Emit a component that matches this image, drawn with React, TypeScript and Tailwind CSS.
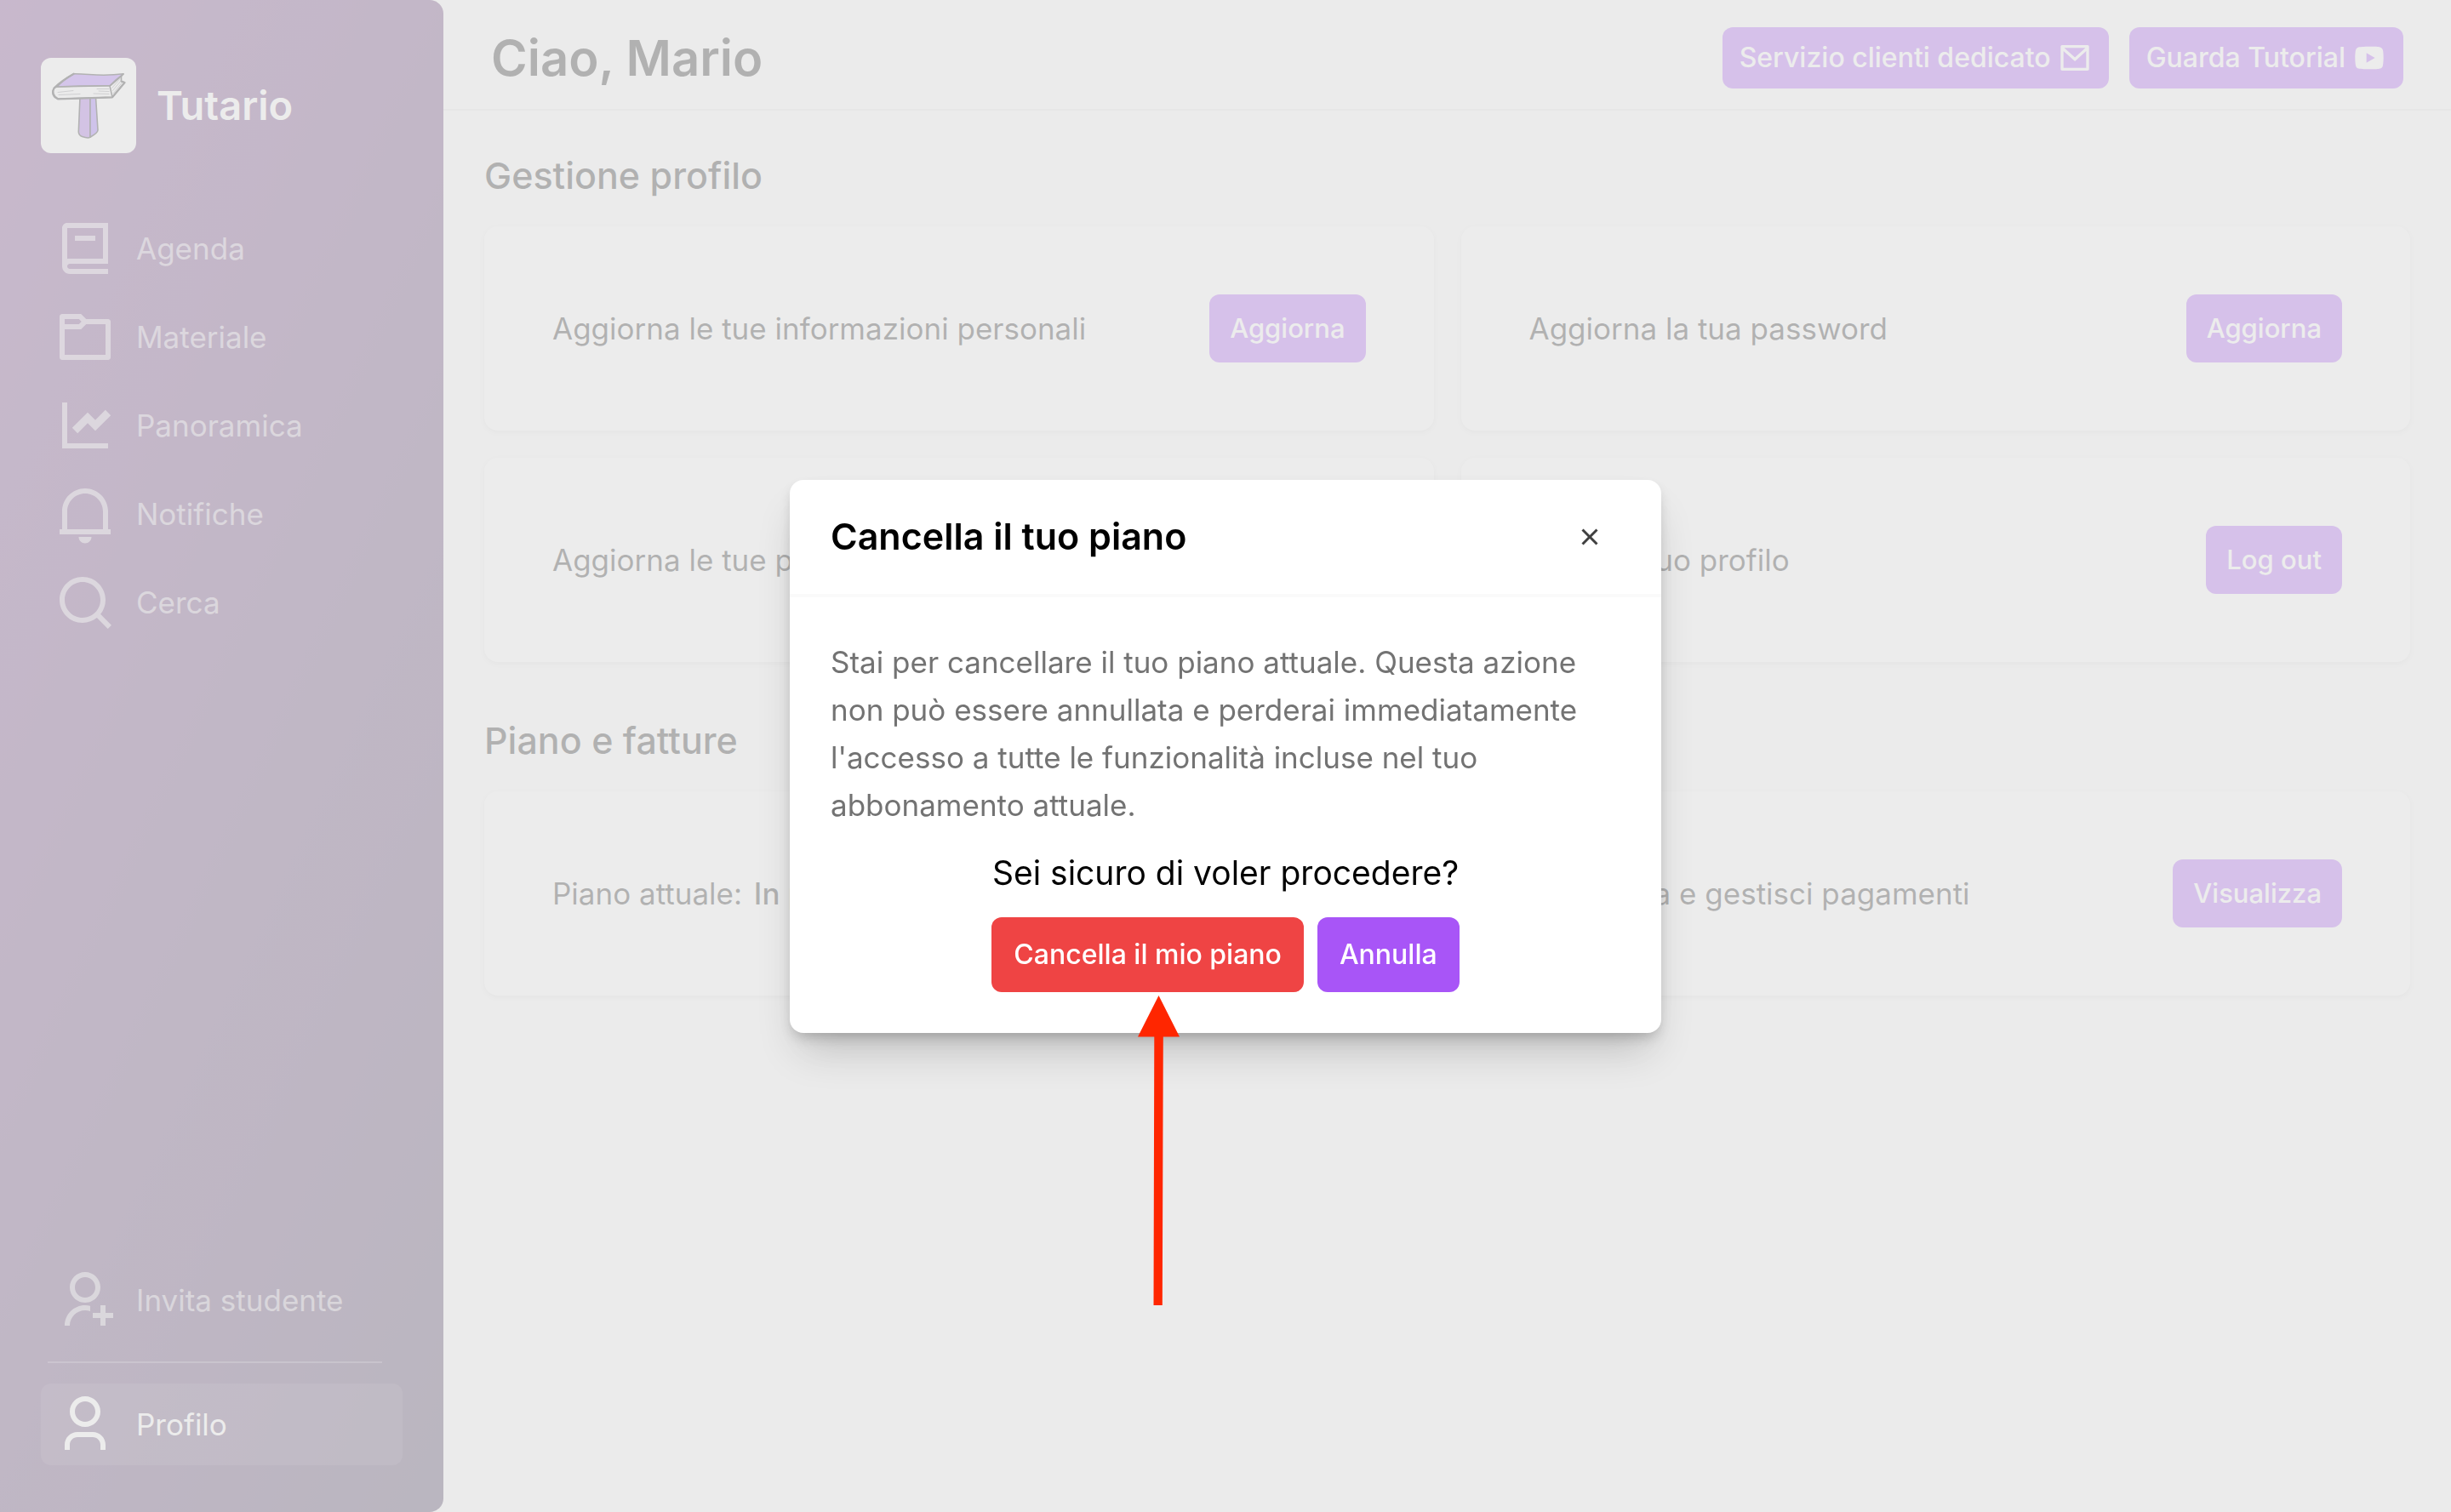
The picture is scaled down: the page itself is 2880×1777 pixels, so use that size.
import type { ReactNode } from "react";
import type { IconType } from "react-icons";
import {
  RiBook2Line,
  RiCloseLine,
  RiFolder6Line,
  RiLineChartFill,
  RiMailLine,
  RiNotification2Line,
  RiSearchLine,
  RiUser3Line,
  RiUserAddLine,
  RiYoutubeFill,
} from "react-icons/ri";

const mainLinks = [
  { label: "Agenda", href: "#agenda", icon: RiBook2Line },
  { label: "Materiale", href: "#materiale", icon: RiFolder6Line },
  { label: "Panoramica", href: "#panoramica", icon: RiLineChartFill },
  { label: "Notifiche", href: "#notifiche", icon: RiNotification2Line },
  { label: "Cerca", href: "#cerca", icon: RiSearchLine },
];

/** Logo: un libro appoggiato su un manico, a forma di T. */
function Logo() {
  return (
    <svg
      viewBox="0 0 112 112"
      className="w-28 h-28 shrink-0 rounded-xl bg-white"
      stroke="#18181b"
      strokeWidth={1.6}
      strokeLinejoin="round"
      strokeLinecap="round"
      aria-hidden="true"
    >
      <path d="M46 46L44.300 87Q44.500 91 48.500 92.500Q55.500 95 58 93.200L58 46Z" fill="#9b5de0" />
      <path d="M58 46L64.500 46L67 85Q67 88 58 93.200Z" fill="#8b5cf6" />
      <path d="M19 34L81 32.800L97 19L94.500 21.500L94.500 27.500L98.500 29L84 46.300L20 48.300Q14 46.500 13.800 40.500Q14 35.500 19 34Z" fill="#fafafa" />
      <path d="M38.700 18.700C58 18.500 68 22.500 97 18.800Q89 24.500 81 32.800Q48 32.600 19 34Q26 26 38.700 18.700Z" fill="#a066f5" />
      <path d="M38.700 18.700Q24 27 15.500 35.500Q11.500 43 20 48.300L84 46.300L98.500 29L94.500 27.500" fill="none" strokeWidth={2.2} />
      <path d="M81 32.800L84 46.300M82.500 32L95 21" fill="none" />
      <path
        d="M20 40.500L38 38.500M21 43.500L46 42.500M62 42L80 42.500M68 39L80 39.500M66 36.500L80 36.500M85 42L95 29.500M84.500 38.500L94 27M84 35L93.500 24"
        fill="none"
        stroke="#71717a"
        strokeWidth={0.8}
      />
    </svg>
  );
}

function NavItem({
  label,
  href,
  icon: Icon,
  active = false,
}: {
  label: string;
  href: string;
  icon: IconType;
  active?: boolean;
}) {
  return (
    <a
      href={href}
      aria-current={active ? "page" : undefined}
      className={`flex items-center gap-6 h-24 px-4 rounded-xl text-[35px] ${
        active ? "bg-white/10 text-white" : "text-white/60"
      }`}
    >
      <Icon size={72} className="shrink-0" />
      {label}
    </a>
  );
}

function Sidebar() {
  return (
    <aside className="w-[521px] shrink-0 flex flex-col px-12 pt-17 pb-[55px] rounded-r-2xl bg-[linear-gradient(115deg,#703282,#39284f)]">
      <div className="flex items-center gap-6">
        <Logo />
        <span className="text-[47px] font-semibold text-white">Tutario</span>
      </div>
      <nav className="flex-1 flex flex-col gap-2 mt-16">
        {mainLinks.map((link) => (
          <NavItem key={link.label} {...link} />
        ))}
        <div className="mt-auto flex flex-col gap-6">
          <NavItem label="Invita studente" href="#invita" icon={RiUserAddLine} />
          <hr className="ml-2 mr-6 border-t-2 border-white/25" />
          <NavItem label="Profilo" href="#profilo" icon={RiUser3Line} active />
        </div>
      </nav>
    </aside>
  );
}

function HeaderButton({ label, icon: Icon }: { label: string; icon: IconType }) {
  return (
    <button
      type="button"
      className="flex items-center gap-2 h-18 px-5 rounded-xl bg-[#a855f7] text-white text-[32px] font-medium"
    >
      {label}
      <Icon size={40} />
    </button>
  );
}

function Card({ action, children }: { action: string; children: ReactNode }) {
  return (
    <div className="flex items-center justify-between h-60 px-20 rounded-2xl bg-white shadow-[0_2px_6px_rgba(0,0,0,0.1)]">
      <p className="text-[35px]">{children}</p>
      <button
        type="button"
        className="h-20 px-6 rounded-xl bg-[#a855f7] text-white text-[31px] font-medium"
      >
        {action}
      </button>
    </div>
  );
}

function Section({ title, children }: { title: string; children: ReactNode }) {
  return (
    <section>
      <h2 className="text-[43px] leading-[60px] font-medium">{title}</h2>
      <div className="grid grid-cols-2 gap-8 mt-[30px]">{children}</div>
    </section>
  );
}

/** Freccia che indica il pulsante di conferma. */
function Arrow() {
  return (
    <svg
      viewBox="0 0 50 364"
      className="absolute top-full left-[172px] mt-1 w-[50px] h-[364px] pointer-events-none"
      fill="#ff2600"
      aria-hidden="true"
    >
      <path d="M24.500 0L49 48.500H29.800L28.800 364H18.500L19.300 48.500H0Z" />
    </svg>
  );
}

function CancelPlanDialog() {
  return (
    <div className="fixed inset-0 flex items-center justify-center bg-neutral-200/75">
      <div
        role="dialog"
        aria-modal="true"
        aria-labelledby="cancel-title"
        className="w-full max-w-5xl rounded-2xl bg-white shadow-[0_30px_50px_-12px_rgba(0,0,0,0.2),0_8px_16px_-4px_rgba(0,0,0,0.22)]"
      >
        <div className="flex items-center justify-between h-[138px] pl-12 pr-[66px] border-b-4 border-neutral-50">
          <h2 id="cancel-title" className="text-[43px] font-semibold text-black">
            Cancella il tuo piano
          </h2>
          <button type="button" aria-label="Chiudi" className="text-neutral-700">
            <RiCloseLine size={36} />
          </button>
        </div>
        <div className="p-12">
          <p className="text-[35px] leading-14 text-neutral-500">
            Stai per cancellare il tuo piano attuale. Questa azione non può
            essere annullata e perderai immediatamente l'accesso a tutte le
            funzionalità incluse nel tuo abbonamento attuale.
          </p>
          <p className="mt-6 text-[39px] leading-14 text-center text-black">
            Sei sicuro di voler procedere?
          </p>
          <div className="flex justify-center gap-4 mt-6">
            <div className="relative">
              <button
                type="button"
                className="h-22 px-[26px] rounded-xl bg-[#ef4444] text-white text-[32px] font-medium"
              >
                Cancella il mio piano
              </button>
              <Arrow />
            </div>
            <button
              type="button"
              className="h-22 px-[26px] rounded-xl bg-[#a855f7] text-white text-[32px] font-medium"
            >
              Annulla
            </button>
          </div>
        </div>
      </div>
    </div>
  );
}

export default function App() {
  return (
    <div className="min-h-screen flex bg-neutral-50 text-neutral-900 font-['Inter',sans-serif]">
      <Sidebar />
      <div className="flex-1 min-w-0">
        <header className="flex items-center justify-between h-[130px] pt-2 px-14 border-b-2 border-neutral-200">
          <h1 className="text-[58px] font-semibold">Ciao, Mario</h1>
          <div className="flex gap-6">
            <HeaderButton label="Servizio clienti dedicato" icon={RiMailLine} />
            <HeaderButton label="Guarda Tutorial" icon={RiYoutubeFill} />
          </div>
        </header>
        <main className="flex flex-col gap-[62px] px-12 py-[46px]">
          <Section title="Gestione profilo">
            <Card action="Aggiorna">Aggiorna le tue informazioni personali</Card>
            <Card action="Aggiorna">Aggiorna la tua password</Card>
            <Card action="Aggiorna">Aggiorna le tue preferenze</Card>
            <Card action="Log out">Esci dal tuo profilo</Card>
          </Section>
          <Section title="Piano e fatture">
            <Card action="Cancella">
              Piano attuale: <span className="ml-1 font-medium">In prova</span>
            </Card>
            <Card action="Visualizza">Visualizza e gestisci pagamenti</Card>
          </Section>
        </main>
      </div>
      <CancelPlanDialog />
    </div>
  );
}
